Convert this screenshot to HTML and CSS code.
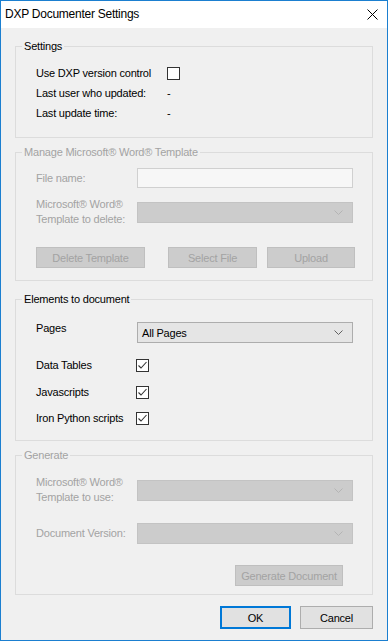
FILE: index.html
```html
<!DOCTYPE html>
<html>
<head>
<meta charset="utf-8">
<link rel="stylesheet" href="styles.css">
</head>
<body>
<div class="window">
  <div class="titlebar">
    <span class="title">DXP Documenter Settings</span>
    <svg class="close" width="11" height="11" viewBox="0 0 11 11"><path d="M0.5 0.5 L10.5 10.5 M10.5 0.5 L0.5 10.5" stroke="#000" stroke-width="1" fill="none"/></svg>
  </div>
  <div class="content">
    <section class="group g-settings">
      <div class="legend">Settings</div>
      <div class="srow srow-first"><span>Use DXP version control</span><span class="checkbox"></span></div>
      <div class="srow"><span>Last user who updated:</span><span>-</span></div>
      <div class="srow"><span>Last update time:</span><span>-</span></div>
    </section>

    <section class="group g-manage disabled">
      <div class="legend">Manage Microsoft® Word® Template</div>
      <div class="frow fr-file"><span class="lbl">File name:</span><span class="textbox"></span></div>
      <div class="frow fr-del"><span class="lbl two">Microsoft® Word®<br>Template to delete:</span><span class="combo off"><svg class="chev" width="9" height="5" viewBox="0 0 9 5"><polyline points="0.5,0.5 4.5,4.5 8.5,0.5" fill="none" stroke="#b4b4b4"/></svg></span></div>
      <div class="btnrow">
        <span class="btn off b-del">Delete Template</span>
        <span class="btn off b-sel">Select File</span>
        <span class="btn off b-up">Upload</span>
      </div>
    </section>

    <section class="group g-elements">
      <div class="legend">Elements to document</div>
      <div class="frow fr-pages"><span class="lbl top">Pages</span><span class="combo on"><span class="val">All Pages</span><svg class="chev" width="9" height="5" viewBox="0 0 9 5"><polyline points="0.5,0.5 4.5,4.5 8.5,0.5" fill="none" stroke="#606060"/></svg></span></div>
      <div class="crow cr-1"><span class="lbl">Data Tables</span><span class="checkbox"><svg width="11" height="11" viewBox="0 0 11 11"><polyline points="1.5,5.5 4,8 9.5,2" fill="none" stroke="#333" stroke-width="1.1"/></svg></span></div>
      <div class="crow cr-2"><span class="lbl">Javascripts</span><span class="checkbox"><svg width="11" height="11" viewBox="0 0 11 11"><polyline points="1.5,5.5 4,8 9.5,2" fill="none" stroke="#333" stroke-width="1.1"/></svg></span></div>
      <div class="crow cr-3"><span class="lbl">Iron Python scripts</span><span class="checkbox"><svg width="11" height="11" viewBox="0 0 11 11"><polyline points="1.5,5.5 4,8 9.5,2" fill="none" stroke="#333" stroke-width="1.1"/></svg></span></div>
    </section>

    <section class="group g-generate disabled">
      <div class="legend">Generate</div>
      <div class="frow fr-use"><span class="lbl two">Microsoft® Word®<br>Template to use:</span><span class="combo off"><svg class="chev" width="9" height="5" viewBox="0 0 9 5"><polyline points="0.5,0.5 4.5,4.5 8.5,0.5" fill="none" stroke="#b4b4b4"/></svg></span></div>
      <div class="frow fr-ver"><span class="lbl">Document Version:</span><span class="combo off"><svg class="chev" width="9" height="5" viewBox="0 0 9 5"><polyline points="0.5,0.5 4.5,4.5 8.5,0.5" fill="none" stroke="#b4b4b4"/></svg></span></div>
      <div class="genrow"><span class="btn off b-gen">Generate Document</span></div>
    </section>

    <div class="footer">
      <span class="btn ok">OK</span>
      <span class="btn cancel">Cancel</span>
    </div>
  </div>
</div>
</body>
</html>
```

FILE: styles.css
```css
html, body {
  margin: 0;
  padding: 0;
}
body {
  font-family: "Liberation Sans", Arial, sans-serif;
  font-size: 11px;
  letter-spacing: -0.2px;
  color: #000;
  background: #f0f0f0;
}
.window {
  width: 388px;
  height: 641px;
  box-sizing: border-box;
  border: 1px solid #1b7fd0;
  display: flex;
  flex-direction: column;
  background: #f0f0f0;
}
.titlebar {
  height: 27px;
  background: #fff;
  display: flex;
  align-items: center;
  justify-content: space-between;
  padding: 0 9px 0 4px;
  flex: none;
}
.title {
  font-size: 12px;
  letter-spacing: -0.25px;
  color: #000;
  margin-top: -2px;
}
.close {
  display: block;
  margin-top: -1px;
}
.content {
  flex: 1;
  padding: 0 14px;
  display: flex;
  flex-direction: column;
}
.group {
  border: 1px solid #dcdcdc;
  box-sizing: border-box;
  padding: 0 0 0 20px;
  flex: none;
}
.legend {
  width: fit-content;
  margin: -7px 0 0 -14px;
  padding: 0 2px;
  line-height: 13px;
  background: #f0f0f0;
}
.disabled, .disabled .legend {
  color: #a3a3a3;
}

/* Settings */
.g-settings {
  margin-top: 18px;
  height: 92px;
}
.srow {
  display: grid;
  grid-template-columns: 131px auto;
  align-items: center;
  height: 20px;
}
.srow-first {
  margin-top: 10px;
}

/* generic field rows */
.frow {
  display: grid;
  grid-template-columns: 101px 216px;
  align-items: center;
}
.lbl {
  line-height: 13px;
}
.lbl.two {
  line-height: 15px;
}
.lbl.top {
  align-self: start;
}
.textbox {
  display: block;
  height: 20px;
  box-sizing: border-box;
  border: 1px solid #d0d0d0;
  background: #f7f7f7;
}
.combo {
  display: flex;
  align-items: center;
  justify-content: space-between;
  height: 21px;
  box-sizing: border-box;
  padding: 0 9px 0 4px;
}
.combo.off {
  background: #cccccc;
  border: 1px solid #c3c3c3;
  justify-content: flex-end;
}
.combo.on {
  background: #e5e5e5;
  border: 1px solid #adadad;
}
.chev {
  display: block;
}

.btn {
  display: flex;
  align-items: center;
  justify-content: center;
  box-sizing: border-box;
  height: 21px;
}
.btn.off {
  background: #cccccc;
  border: 1px solid #bfbfbf;
  color: #a3a3a3;
}

/* Manage */
.g-manage {
  margin-top: 14px;
  height: 129px;
}
.fr-file {
  margin-top: 9px;
}
.fr-del {
  margin-top: 9px;
}
.btnrow {
  display: flex;
  margin-top: 20px;
}
.b-del { width: 109px; }
.b-sel { width: 89px; margin-left: 23px; }
.b-up { width: 88px; margin-left: 10px; }

/* Elements */
.g-elements {
  margin-top: 18px;
  height: 142px;
}
.fr-pages {
  margin-top: 16px;
}
.crow {
  display: grid;
  grid-template-columns: 100px auto;
  align-items: center;
}
.cr-1 { margin-top: 16px; }
.cr-2 { margin-top: 14px; }
.cr-3 { margin-top: 13px; }
.checkbox {
  display: block;
  width: 13px;
  height: 13px;
  box-sizing: border-box;
  border: 1px solid #333;
  background: #fff;
}
.checkbox svg {
  display: block;
}

/* Generate */
.g-generate {
  margin-top: 14px;
  height: 140px;
}
.fr-use {
  margin-top: 13px;
}
.fr-ver {
  margin-top: 18px;
}
.genrow {
  display: flex;
  justify-content: flex-end;
  width: 307px;
  margin-top: 21px;
}
.b-gen {
  width: 108px;
}

/* Footer */
.footer {
  display: flex;
  justify-content: flex-end;
  gap: 9px;
  margin-top: 11px;
}
.footer .btn {
  height: 23px;
  background: #e1e1e1;
  border: 1px solid #adadad;
}
.btn.ok {
  width: 71px;
  border: 2px solid #0078d7;
}
.btn.cancel {
  width: 73px;
}
```
